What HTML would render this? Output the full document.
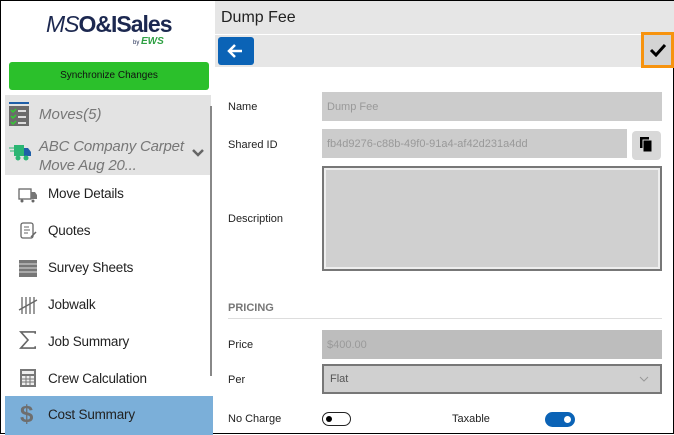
<!DOCTYPE html>
<html><head><style>
*{margin:0;padding:0;box-sizing:border-box}
body{width:674px;height:434px;overflow:hidden;font-family:"Liberation Sans",sans-serif;background:#fff;position:relative;border:1px solid #000}
.a{position:absolute}
.lab{position:absolute;left:227px;font-size:11px;color:#222}
.mi{position:absolute;left:47px;font-size:13.5px;color:#222;letter-spacing:-0.2px}
.ic{position:absolute;left:17px;width:20px;height:18px}
</style></head><body>
<div class="a" style="left:45px;top:10px;font-size:23px;color:#1c2850;letter-spacing:-1px"><i>MS</i><b>O&amp;ISales</b></div>
<div class="a" style="left:132px;top:35px;font-size:6px;color:#1c2850">by <b style="font-size:10px;color:#2ea043;font-style:italic">EWS</b></div>
<div class="a" style="left:8px;top:61px;width:200px;height:28px;background:#2bc02b;border-radius:3px;font-size:10px;text-align:center;line-height:28px;color:#111">Synchronize Changes</div>
<div class="a" style="left:4px;top:94px;width:206px;height:80px;background:#e3e3e3"></div>
<div class="a" style="left:209px;top:105px;width:2px;height:270px;background:#888"></div>
<svg class="a" style="left:8px;top:101px" width="20" height="24"><rect x="0" y="0" width="20" height="2" fill="#1f5fa8"/><rect x="0" y="4" width="20" height="20" fill="#6b6b6b"/><path d="M2 8l2 2 3-3M2 14l2 2 3-3M2 20l2 2 3-3" stroke="#3c3" stroke-width="1.5" fill="none"/><rect x="9" y="8" width="8" height="2" fill="#ddd"/><rect x="9" y="14" width="8" height="2" fill="#ddd"/><rect x="9" y="20" width="8" height="2" fill="#ddd"/></svg>
<div class="a" style="left:38px;top:105px;font-size:15px;font-style:italic;color:#777">Moves(5)</div>
<svg class="a" style="left:8px;top:144px" width="22" height="16"><rect x="5" y="0" width="10" height="11" fill="#2bb673"/><path d="M15 3h4l3 4v4h-7z" fill="#1f5fa8"/><circle cx="9" cy="13" r="2.5" fill="#2bb673"/><circle cx="17" cy="13" r="2.5" fill="#2bb673"/><path d="M0 3h6M1 6h5" stroke="#2bb673"/></svg>
<div class="a" style="left:38px;top:136px;font-size:15px;font-style:italic;color:#777;line-height:19px;letter-spacing:-0.2px">ABC Company Carpet<br>Move Aug 20...</div>
<svg class="a" style="left:191px;top:148px" width="12" height="8"><path d="M1 1l5 5 5-5" stroke="#666" stroke-width="2.5" fill="none"/></svg>
<svg class="ic" style="top:185px" viewBox="0 0 20 18"><rect x="1" y="3" width="12" height="10" fill="none" stroke="#666" stroke-width="1.3"/><path d="M13 6h4l2 3v4h-6z" fill="#777"/><circle cx="4" cy="15" r="1.5" fill="#666"/><circle cx="15" cy="15" r="1.5" fill="#666"/></svg>
<div class="mi" style="top:185px">Move Details</div>
<svg class="ic" style="top:221px" viewBox="0 0 20 18"><rect x="3" y="1" width="12" height="15" rx="2" fill="none" stroke="#666" stroke-width="1.3"/><path d="M6 5h5M6 8h6M6 11h4" stroke="#666"/><path d="M13 15l5-5" stroke="#666" stroke-width="1.5"/></svg>
<div class="mi" style="top:222px">Quotes</div>
<svg class="ic" style="top:258px" viewBox="0 0 20 18"><rect x="1" y="1" width="18" height="17" fill="#777"/><path d="M1 5h18M1 9h18M1 13h18" stroke="#ddd"/></svg>
<div class="mi" style="top:259px">Survey Sheets</div>
<svg class="ic" style="top:295px" viewBox="0 0 20 18"><path d="M4 1v17M8 1v17M12 1v17M16 1v17M1 14L19 4" stroke="#666" stroke-width="1.3"/></svg>
<div class="mi" style="top:296px">Jobwalk</div>
<svg class="ic" style="top:330px" viewBox="0 0 20 20"><path d="M18 3V1H2l8 9-8 9h16v-2" stroke="#666" stroke-width="1.8" fill="none"/></svg>
<div class="mi" style="top:333px">Job Summary</div>
<svg class="ic" style="top:368px" viewBox="0 0 20 18"><rect x="2" y="0" width="16" height="18" fill="#777"/><rect x="4" y="2" width="12" height="3" fill="#eee"/><path d="M4 7h12v9H4z" fill="#eee"/><path d="M8 7v9M12 7v9M4 10h12M4 13h12" stroke="#777"/></svg>
<div class="mi" style="top:370px">Crew Calculation</div>
<div class="a" style="left:4px;top:395px;width:208px;height:39px;background:#7bafd9"></div>
<div class="a" style="left:19px;top:400px;font-size:24px;font-weight:bold;color:#6e6e6e">$</div>
<div class="mi" style="top:406px">Cost Summary</div>
<div class="a" style="left:214px;top:0;width:460px;height:33px;background:#e6e6e6"></div>
<div class="a" style="left:220px;top:8px;font-size:16px;color:#222">Dump Fee</div>
<div class="a" style="left:214px;top:34px;width:460px;height:32px;background:#e6e6e6"></div>
<div class="a" style="left:217px;top:36px;width:36px;height:28px;background:#0b63b6;border-radius:3px"></div>
<svg class="a" style="left:225px;top:42px" width="18" height="16"><path d="M16 8H3M9 2L3 8l6 6" stroke="#fff" stroke-width="2.5" fill="none"/></svg>
<div class="a" style="left:640px;top:31px;width:33px;height:36px;border:3px solid #f7930e;background:#d4d4d4"></div>
<svg class="a" style="left:648px;top:42px" width="18" height="14"><path d="M2 7l5 5 9-10" stroke="#000" stroke-width="3" fill="none"/></svg>
<div class="lab" style="top:100px">Name</div>
<div class="a" style="left:321px;top:91px;width:340px;height:29px;background:#cccccc;font-size:11px;color:#999;padding:9px 5px">Dump Fee</div>
<div class="lab" style="top:138px">Shared ID</div>
<div class="a" style="left:321px;top:128px;width:305px;height:29px;background:#cccccc;font-size:11px;color:#999;padding:9px 5px">fb4d9276-c88b-49f0-91a4-af42d231a4dd</div>
<div class="a" style="left:631px;top:130px;width:29px;height:29px;background:#d8d8d8;border-radius:4px"></div>
<svg class="a" style="left:638px;top:135px" width="16" height="18"><rect x="1" y="1" width="9" height="11" fill="#000"/><rect x="4" y="4" width="9" height="12" fill="#000" stroke="#d8d8d8"/></svg>
<div class="lab" style="top:212px">Description</div>
<div class="a" style="left:321px;top:165px;width:340px;height:105px;border:2px solid #777;background:#d0d0d0;box-shadow:inset 0 0 0 2px #eee"></div>
<div class="a" style="left:227px;top:301px;font-size:11px;font-weight:bold;color:#777">PRICING</div>
<div class="a" style="left:227px;top:317px;width:434px;height:1px;background:#ddd"></div>
<div class="lab" style="top:338px">Price</div>
<div class="a" style="left:321px;top:329px;width:340px;height:29px;background:#bdbdbd;font-size:11px;color:#9a9a9a;padding:9px 5px">$400.00</div>
<div class="lab" style="top:373px">Per</div>
<div class="a" style="left:321px;top:363px;width:340px;height:30px;border:2px solid #777;background:#d0d0d0;font-size:11px;color:#555;padding:7px 6px">Flat</div>
<svg class="a" style="left:638px;top:375px" width="10" height="6"><path d="M1 1l4 4 4-4" stroke="#999" fill="none"/></svg>
<div class="lab" style="top:412px">No Charge</div>
<div class="a" style="left:321px;top:411px;width:29px;height:14px;border:1.5px solid #222;border-radius:7px"></div>
<div class="a" style="left:325px;top:415px;width:6px;height:6px;border-radius:3px;background:#000"></div>
<div class="a" style="left:451px;top:412px;font-size:11px;color:#222">Taxable</div>
<div class="a" style="left:544px;top:411px;width:30px;height:15px;background:#0b63b6;border-radius:8px"></div>
<div class="a" style="left:563px;top:415px;width:7px;height:7px;border-radius:4px;background:#fff"></div>
</body></html>
